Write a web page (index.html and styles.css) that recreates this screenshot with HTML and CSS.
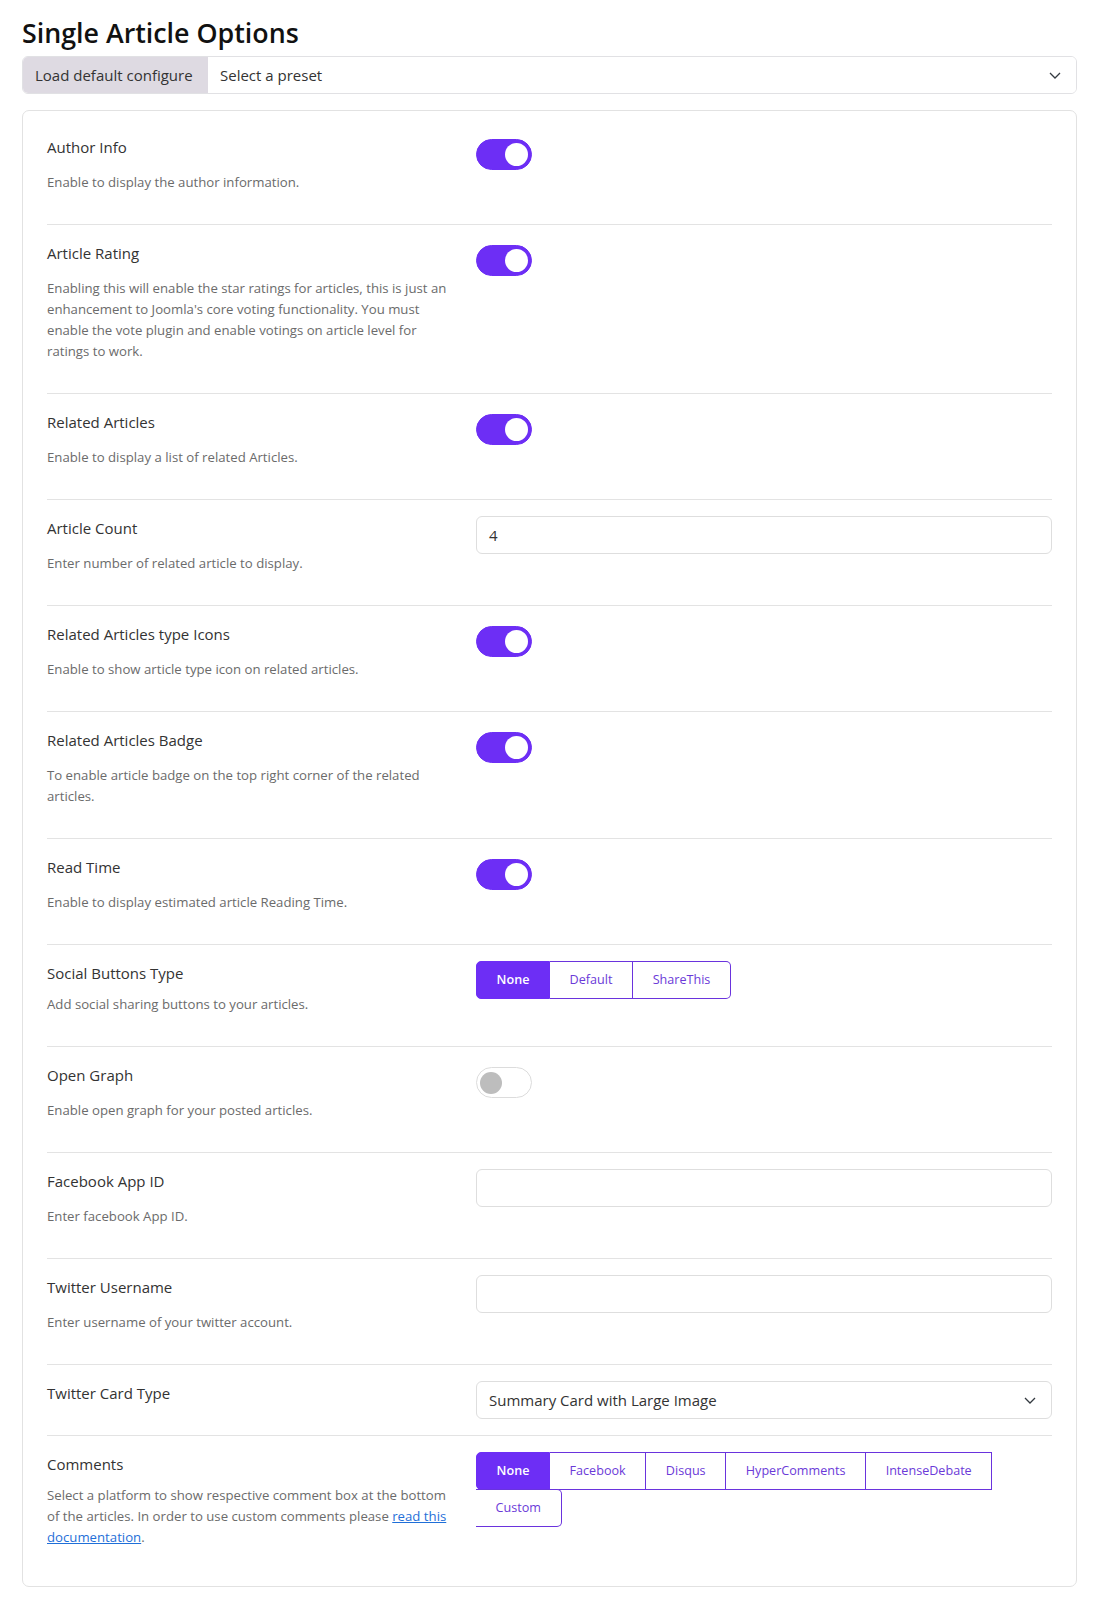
FILE: index.html
```html
<!DOCTYPE html>
<html lang="en">
<head>
<meta charset="utf-8">
<title>Single Article Options</title>
<link rel="stylesheet" href="styles.css">
</head>
<body>
<div class="page">
  <h1 class="page-title">Single Article Options</h1>

  <div class="preset-bar">
    <button class="preset-btn" type="button">Load default configure</button>
    <div class="select preset-select">
      <span>Select a preset</span>
      <svg class="chevron" width="12" height="7" viewBox="0 0 12 7"><path d="M1 1l5 5 5-5" fill="none" stroke="#343a40" stroke-width="1.3"/></svg>
    </div>
  </div>

  <div class="card">
    <div class="row">
      <div class="info">
        <div class="label">Author Info</div>
        <div class="desc">Enable to display the author information.</div>
      </div>
      <div class="control"><span class="toggle on"><span class="knob"></span></span></div>
    </div>

    <div class="row">
      <div class="info">
        <div class="label">Article Rating</div>
        <div class="desc">Enabling this will enable the star ratings for articles, this is just an enhancement to Joomla's core voting functionality. You must enable the vote plugin and enable votings on article level for ratings to work.</div>
      </div>
      <div class="control"><span class="toggle on"><span class="knob"></span></span></div>
    </div>

    <div class="row">
      <div class="info">
        <div class="label">Related Articles</div>
        <div class="desc">Enable to display a list of related Articles.</div>
      </div>
      <div class="control"><span class="toggle on"><span class="knob"></span></span></div>
    </div>

    <div class="row">
      <div class="info">
        <div class="label">Article Count</div>
        <div class="desc">Enter number of related article to display.</div>
      </div>
      <div class="control"><div class="input">4</div></div>
    </div>

    <div class="row">
      <div class="info">
        <div class="label">Related Articles type Icons</div>
        <div class="desc">Enable to show article type icon on related articles.</div>
      </div>
      <div class="control"><span class="toggle on"><span class="knob"></span></span></div>
    </div>

    <div class="row">
      <div class="info">
        <div class="label">Related Articles Badge</div>
        <div class="desc">To enable article badge on the top right corner of the related articles.</div>
      </div>
      <div class="control"><span class="toggle on"><span class="knob"></span></span></div>
    </div>

    <div class="row">
      <div class="info">
        <div class="label">Read Time</div>
        <div class="desc">Enable to display estimated article Reading Time.</div>
      </div>
      <div class="control"><span class="toggle on"><span class="knob"></span></span></div>
    </div>

    <div class="row tight">
      <div class="info">
        <div class="label">Social Buttons Type</div>
        <div class="desc">Add social sharing buttons to your articles.</div>
      </div>
      <div class="control">
        <div class="seg">
          <span class="seg-btn active">None</span>
          <span class="seg-btn">Default</span>
          <span class="seg-btn">ShareThis</span>
        </div>
      </div>
    </div>

    <div class="row">
      <div class="info">
        <div class="label">Open Graph</div>
        <div class="desc">Enable open graph for your posted articles.</div>
      </div>
      <div class="control"><span class="toggle"><span class="knob"></span></span></div>
    </div>

    <div class="row">
      <div class="info">
        <div class="label">Facebook App ID</div>
        <div class="desc">Enter facebook App ID.</div>
      </div>
      <div class="control"><div class="input"></div></div>
    </div>

    <div class="row">
      <div class="info">
        <div class="label">Twitter Username</div>
        <div class="desc">Enter username of your twitter account.</div>
      </div>
      <div class="control"><div class="input"></div></div>
    </div>

    <div class="row no-desc">
      <div class="info">
        <div class="label">Twitter Card Type</div>
      </div>
      <div class="control">
        <div class="select">
          <span>Summary Card with Large Image</span>
          <svg class="chevron" width="12" height="7" viewBox="0 0 12 7"><path d="M1 1l5 5 5-5" fill="none" stroke="#343a40" stroke-width="1.3"/></svg>
        </div>
      </div>
    </div>

    <div class="row tight last">
      <div class="info">
        <div class="label">Comments</div>
        <div class="desc">Select a platform to show respective comment box at the bottom of the articles. In order to use custom comments please <a href="#">read this documentation</a>.</div>
      </div>
      <div class="control">
        <div class="seg">
          <span class="seg-btn active">None</span>
          <span class="seg-btn">Facebook</span>
          <span class="seg-btn">Disqus</span>
          <span class="seg-btn">HyperComments</span>
          <span class="seg-btn">IntenseDebate</span>
          <span class="seg-btn">Custom</span>
        </div>
      </div>
    </div>
  </div>
</div>
</body>
</html>
```

FILE: styles.css
```css
* { box-sizing: border-box; }

body {
  margin: 0;
  background: #ffffff;
  font-family: "Open Sans", "Noto Sans", "Liberation Sans", sans-serif;
  color: #333333;
}

.page {
  padding: 17px 20px 11px 22px;
}

.page-title {
  margin: 0 0 7px;
  font-size: 26.8px;
  line-height: 32px;
  font-weight: 600;
  color: #111111;
}

.preset-bar {
  display: flex;
  height: 38px;
  border: 1px solid #e1e1e4;
  border-radius: 6px;
  overflow: hidden;
}

.preset-btn {
  flex: none;
  border: 0;
  margin: 0;
  padding: 0 12px;
  background: #dedae2;
  color: #333333;
  font-family: inherit;
  font-size: 15px;
  width: 185px;
  text-align: left;
}

.select {
  flex: 1;
  display: flex;
  align-items: center;
  justify-content: space-between;
  height: 38px;
  padding: 0 15px 0 12px;
  font-size: 15px;
  color: #333333;
  border: 1px solid #dedede;
  border-radius: 6px;
  background: #fff;
}

.preset-select {
  height: 36px;
  border: 0;
  border-radius: 0;
}

.chevron { display: block; }

.card {
  margin-top: 16px;
  border: 1px solid #e2e2e2;
  border-radius: 7px;
  padding: 24px;
}

.row {
  display: grid;
  grid-template-columns: 405px 1fr;
  column-gap: 24px;
  padding: 16px 0 31px;
  border-bottom: 1px solid #e3e3e3;
}

.row:first-child { padding-top: 0; }

.row.no-desc { padding-bottom: 16px; }
.row.no-desc .info { padding-bottom: 14px; }

.row.last {
  border-bottom: 0;
  padding-bottom: 14px;
}

.label {
  font-size: 15px;
  line-height: 24px;
  color: #333333;
}

.desc {
  margin-top: 13px;
  font-size: 13.2px;
  line-height: 21px;
  color: #6b6b6b;
}

.row.tight .desc { margin-top: 9px; }

.desc a {
  color: #1f6fd8;
  text-decoration: underline;
}

.control { min-width: 0; }

.toggle {
  display: flex;
  align-items: center;
  width: 56px;
  height: 31px;
  margin-top: 4px;
  border-radius: 16px;
  border: 1px solid #dcdcdc;
  background: #ffffff;
  padding: 0 3px;
}

.toggle .knob {
  width: 22px;
  height: 22px;
  border-radius: 50%;
  background: #bdbdbd;
}

.toggle.on {
  background: #6d2ef5;
  border-color: #6d2ef5;
  justify-content: flex-end;
}

.toggle.on .knob {
  width: 23px;
  height: 23px;
  background: #ffffff;
}

.input {
  height: 38px;
  border: 1px solid #dedede;
  border-radius: 6px;
  padding: 0 12px;
  font-size: 15px;
  line-height: 36px;
  color: #333333;
}

.seg {
  display: flex;
  flex-wrap: wrap;
}

.seg-btn {
  display: block;
  height: 38px;
  margin-bottom: -1px;
  padding: 0 19.6px;
  border: 1px solid #6a33dd;
  border-left-width: 0;
  font-size: 12.6px;
  line-height: 36px;
  color: #6b3ad8;
  background: #ffffff;
}

.seg-btn:first-child {
  border-left-width: 1px;
  border-radius: 5px 0 0 5px;
}

.seg-btn:last-child {
  border-radius: 0 5px 5px 0;
}

.seg-btn.active {
  background: #6d2ef5;
  border-color: #6d2ef5;
  color: #ffffff;
  font-weight: 600;
}
```
